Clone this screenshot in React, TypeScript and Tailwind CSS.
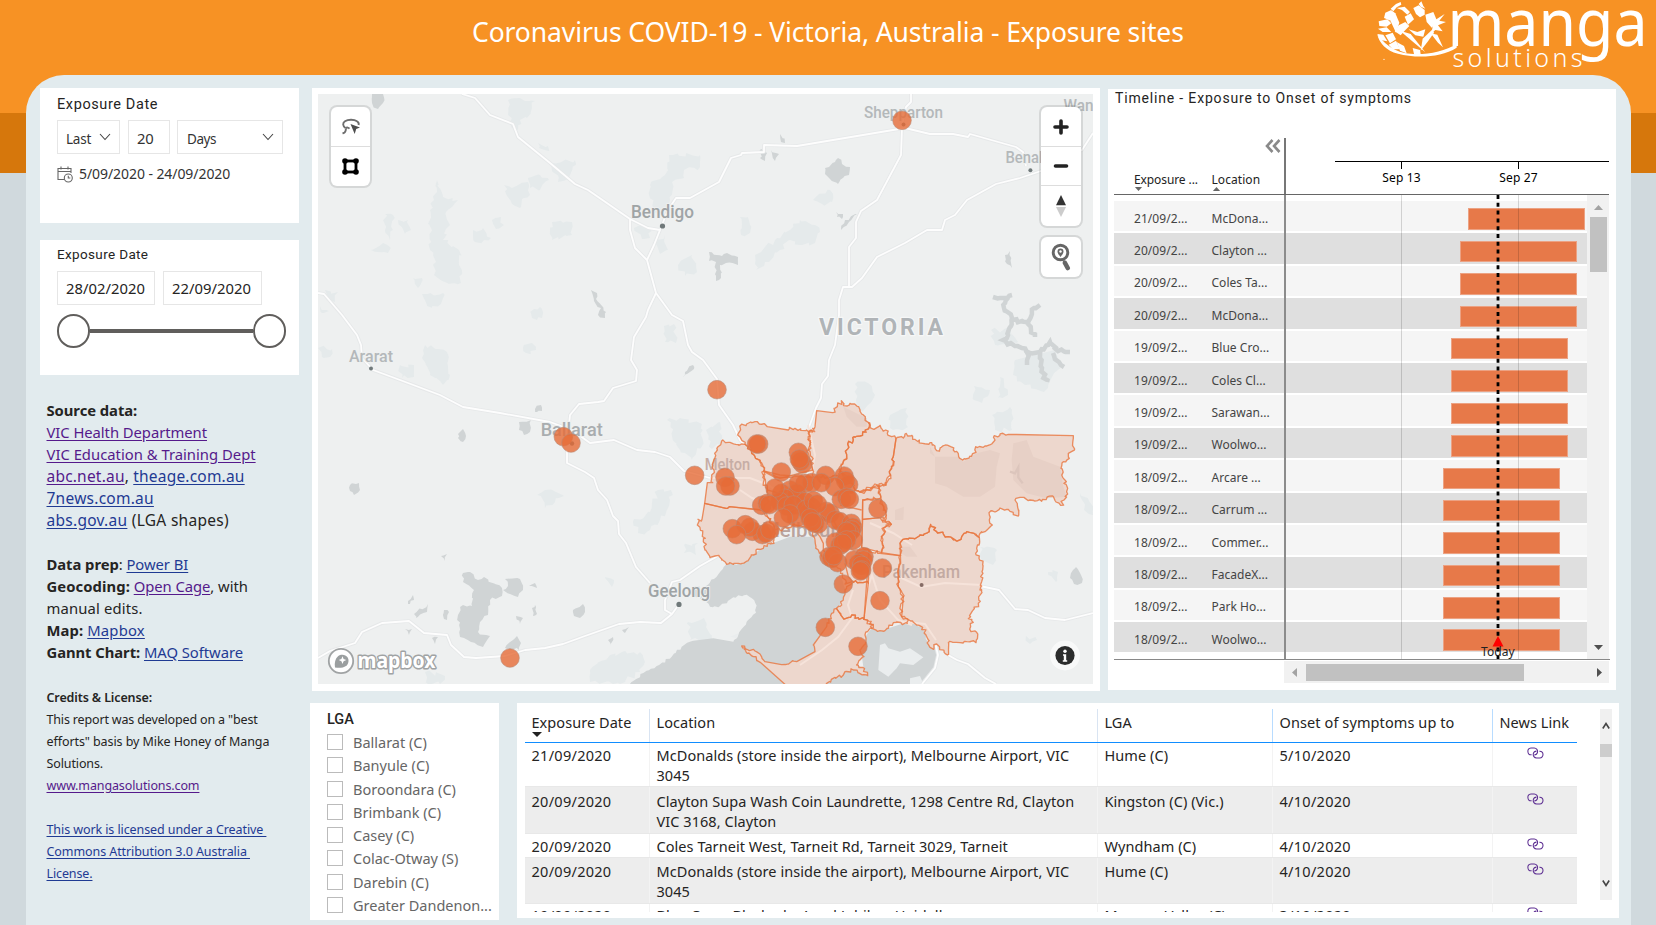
import React from "react";

const UI = "font-['Noto_Sans','Open_Sans',sans-serif]";
const DIN = "font-['Roboto','Noto_Sans',sans-serif]";

/* ---------- map data (page pixels) ---------- */

const ROADS = [
  "462,94 475,98 490,115 513,124 518,137 550,163 575,184 588,190 630,219 630,230 635,248 647,260 656,293 672,315 683,321 688,345 692,352 703,360 717,379 719,405 733,425 740,440 752,455",
  "630,219 648,228 660,230 654,245 647,260",
  "660,230 668,210 676,198 690,198 719,182 731,158 741,155 742,153 764,152 764,145 797,146 905,128 930,134 953,134 968,137 970,134 1016,147 1023,152 1026,166",
  "902,125 906,107 911,102 911,94",
  "902,128 901,155 877,200 861,211 856,222 856,238 849,247 849,286",
  "1093,133 1082,150 1041,171 1020,178 996,184 967,200 955,215 945,220 942,230 927,230 905,243 877,257 862,278 852,287 843,287 839,300 839,315 835,345 829,360 828,376 822,384 821,398 816,408 808,430",
  "656,293 648,310 646,317 634,337 631,360 637,370 636,381 613,388 604,401 598,402 579,404 570,415 569,425",
  "318,293 324,294 342,315 357,335 361,345 362,358 373,370 400,380 440,395 463,407 500,413 550,422 572,430 590,443 614,440 637,450 655,452 670,457 684,471 710,478",
  "567,450 567,463 585,472 594,478 598,490 607,500 613,516 618,521 619,534 626,543 636,567 650,583",
  "318,658 330,651 355,643 362,632 382,623 409,621 424,633 447,635 451,645 464,657 476,658 505,656 525,650 545,648 563,644 585,636 619,624 640,622 661,623 672,614 677,607",
  "672,614 665,610 665,600 672,582 680,580 700,566 725,552",
  "980,586 999,590 1015,609 1028,610 1045,618 1065,620 1093,613",
  "948,655 957,660 968,664 985,678 996,684",
  "934,638 938,655 935,668 922,684",
];

const INNER_ROADS = [
  "710,478 750,478 768,485 790,500",
  "808,425 815,455 810,480",
  "740,490 752,498 765,502",
  "870,523 893,533 912,545",
  "895,575 921,587 945,583 982,585",
  "853,590 848,605 852,618 838,637 822,650 800,665",
  "865,615 867,590 872,575 880,600 898,620 912,625",
  "905,622 925,624 936,640",
];

const PARKS = [
  "437,180 441,190 443,197 458,200 452,207 446,212 450,225 443,240 459,250 459,265 461,283 445,282 434,275 436,262 430,250 430,210 434,200",
  "385,214 393,215 393,230 390,240 385,230",
  "398,220 408,220 411,230 405,234",
  "371,250 383,243 390,247 388,253",
  "473,230 483,228 491,238 484,240 475,242",
  "492,220 501,217 504,225 496,229",
  "508,100 520,98 535,101 532,108 527,118 520,120 518,130 512,128 508,115",
  "504,185 512,188 528,182 530,195 524,198 520,208 512,204",
  "528,178 540,175 549,180 540,190 530,188",
  "538,143 548,146 548,151 539,148",
  "325,290 338,292 335,302 327,300",
  "320,306 329,311 322,313",
  "413,278 422,278 418,288",
  "422,294 443,293 441,304 427,306",
  "530,312 540,307 542,318 532,318",
  "425,345 447,352 450,375 443,385 430,375 422,358",
  "400,365 414,365 414,377 402,378",
  "318,348 332,349 330,357 322,357",
  "523,348 532,343 536,350 526,353",
  "669,155 700,155 700,167 684,170 684,178 672,182 670,200 662,215 652,212 650,185 665,175",
  "634,228 650,228 650,238 642,239",
  "655,240 665,235 668,250 660,254",
  "740,217 748,217 750,233 741,235",
  "755,255 775,240 790,230 800,220 815,225 820,232 815,243 800,245 790,240 780,250 765,262 756,270",
  "678,265 692,255 697,272 685,276",
  "813,200 830,190 832,202 822,204",
  "552,163 575,160 570,175 558,182",
  "552,222 572,222 572,235 552,240",
  "1015,360 1055,350 1060,365 1044,392 1025,385 1013,375",
  "991,330 1010,330 1018,342 995,345",
  "855,384 868,383 875,395 868,405 862,412 856,400",
  "890,415 907,408 908,427 893,430",
  "974,386 990,390 982,403 974,400",
  "992,415 1010,407 1012,430 995,430",
  "1000,377 1008,395 998,398",
  "667,420 680,418 702,424 703,440 692,460 680,450",
  "706,430 720,422 722,440 712,449",
  "664,326 674,324 676,343 665,342",
  "537,495 545,490 564,496 555,502 545,508",
  "633,522 650,512 658,490 671,490 668,508 660,520 650,530 638,533",
  "684,545 698,543 696,555 684,553",
  "605,577 614,580 612,587",
  "590,670 610,655 640,652 645,662 640,672 620,684 590,682",
  "425,672 445,676 440,684 428,684",
  "980,547 997,550 993,565 982,560",
  "1048,572 1058,572 1056,582",
  "1026,636 1037,640 1030,644",
  "688,622 704,618 712,640 690,640",
  "1080,493 1092,505 1093,515 1084,510",
];

const LAKES = [
  "372,94 383,94 383,103 378,109 372,103",
  "825,168 835,162 838,158 842,164 850,167 849,175 840,180 838,184 830,179 825,174",
  "771,150 779,154 775,161",
  "780,134 785,143 781,142",
  "761,149 767,153 765,161 760,158",
  "709,252 722,256 727,253 738,257 738,265 726,263 720,265 721,278 716,281 716,262 709,261",
  "591,290 597,293 596,299 606,312 605,318 598,315 601,308 594,301",
  "836,212 843,214 842,219 837,217",
  "841,230 845,220 857,214 849,222",
  "685,372 693,365 694,369 687,374 683,377",
  "463,573 470,572 478,580 484,577 502,588 502,596 490,600 488,615 480,622 478,632 490,636 483,647 471,642 460,637 458,615 463,605 472,606 474,590 463,582",
  "505,579 520,579 523,590 518,597 510,594 503,590 508,586",
  "573,610 583,604 585,612 580,618 574,616",
  "414,614 428,604 427,612 416,618",
  "408,601 413,595 414,600 410,604",
  "519,422 531,420 530,432 524,435 519,430",
  "458,434 463,429 466,436 463,442 458,438",
  "535,409 541,405 542,411 537,412",
  "350,485 356,484 359,480 360,490 354,495 350,491",
  "441,556 447,554 445,561",
  "505,648 513,640 517,636 521,643 519,650",
  "444,610 449,612 447,620 444,619",
  "516,616 523,618 520,624",
  "532,608 535,605 537,614 533,616",
  "529,586 535,583 537,588",
  "405,629 412,629 409,635",
  "432,638 438,637 435,644",
  "608,640 613,637 611,646",
  "622,630 629,627 625,633",
  "1005,255 1010,251 1012,268 1007,264",
  "1073,570 1076,567 1081,575 1082,583 1074,584 1070,578",
];

const EILDON = [
  "993,297 1000,298 1012,295",
  "1008,298 1004,308 1012,318 1011,326 1008,335 1003,340 1015,346 1022,348 1030,353 1040,352 1050,342 1058,351 1070,352",
  "1012,320 1028,322 1031,330 1035,337",
  "1028,322 1034,308 1040,305",
  "1040,352 1042,368 1047,382",
  "1028,350 1027,365",
  "1053,353 1059,362 1064,367",
];

/* Local grid: origin (680,390), one third of a pixel per unit */
const WATER = [
  "-150,882 -110,849 -70,828 -25,800 5,770 40,752 100,745 160,755 175,735 200,695 228,668 226,640 200,614 160,622 115,652 90,650 60,625 75,590 110,560 140,522 186,521 250,470 330,440 400,440 415,480 440,500 470,520 490,580 500,610 470,655 440,710 563,857 440,882",
  "575,715 600,722 625,715 685,695 725,710 745,760 775,770 775,800 765,830 735,870 715,882 440,882 470,862 563,857 550,830 540,760",
  "40,590 60,590 60,615 50,622 30,610",
];

const ISLANDS = [
  "600,765 615,760 625,775 660,785 690,775 730,802 700,825 660,820 650,835 625,860 595,840",
  "690,865 720,858 730,882 690,882",
  "150,740 175,730 170,745",
];

const REGIONS = [
  "125,153 150,157 195,163 215,190 240,215 251,243 250,278 262,300 262,340 250,360 148,350 138,355 74,340 82,278 98,278 95,255 102,240 100,215 104,190 112,180",
  "182,106 198,107 200,102 215,98 225,95 238,102 252,101 262,110 325,120 328,112 345,115 380,120 395,120 398,126 385,130 390,140 385,150 390,160 385,180 395,200 398,240 300,265 253,243 240,215 215,190 195,163 173,135",
  "74,340 138,355 148,350 250,361 262,380 285,420 282,460 262,462 250,475 228,480 220,495 186,520 140,523 125,510 118,500 105,498 90,503 82,488 75,480 79,463 70,455 76,445 68,430 52,405 54,388 66,388",
  "410,62 458,68 462,55 472,50 484,32 490,44 502,48 510,40 524,42 536,50 540,62 545,72 556,80 566,98 568,108 564,118 548,126 540,138 522,140 520,150 503,162 500,195 493,210 488,222 478,232 478,250 440,262 400,262 398,240 385,190 390,160 384,148 390,136 388,126 404,125 398,115 405,110",
  "566,98 570,108 582,118 600,106 606,117 617,120 622,130 635,140 648,146 640,200 642,215 634,230 628,245 632,255 620,268 618,285 605,280 595,290 585,282 575,295 560,292 552,303 535,303 515,280 495,255 478,245 488,222 495,208 500,195 503,162 520,150 522,140 540,138 548,126 566,116",
  "648,146 670,144 675,132 683,138 695,136 698,148 718,150 728,160 750,158 757,165 765,168 770,182 778,183 784,172 796,165 812,170 820,180 830,184 836,200 848,210 856,207 888,187 887,170 910,172 935,162 945,150 943,137 960,132 985,133 1180,137 1178,160 1184,177 1165,190 1168,205 1150,215 1143,235 1148,262 1163,295 1163,312 1152,330 1142,346 1128,336 1118,318 1085,334 1050,330 1020,322 1005,330 1012,345 1015,378 1000,374 990,364 960,354 945,366 927,368 928,390 937,405 915,425 905,425 897,442 882,430 860,425 845,440 828,452 805,440 790,432 770,425 752,403 748,425 720,435 700,445 685,447 660,460 662,497 605,488 607,465 605,440 612,432 610,415 634,403 615,395 618,375 612,350 600,340 600,310 598,290 618,285 632,255 628,245 642,215 640,200",
  "548,330 562,326 600,326 606,340 618,365 615,392 600,383 548,388",
  "548,388 600,383 620,395 634,403 616,410 606,415 612,432 605,440 609,465 605,488 545,472",
  "660,460 685,447 700,445 720,435 748,425 752,403 770,425 790,432 805,440 828,452 845,440 860,425 882,430 898,442 890,475 887,490 897,505 908,525 906,545 902,560 905,575 900,600 905,605 895,640 878,662 865,686 875,692 873,725 890,727 888,758 860,755 840,758 805,758 802,795 770,762 762,775 750,772 738,735 728,712 710,705 692,693 682,686 665,680 670,620 655,590 658,560 655,540 662,520",
  "567,480 600,490 658,497 660,520 655,540 655,590 660,600 670,620 662,645 665,680 685,690 682,700 640,698 625,715 615,722 600,722 575,715 578,705 552,688",
  "251,243 300,255 400,262 440,262 478,250 515,280 535,303 560,300 600,285 600,326 548,330 545,472 567,480 565,580 520,577 495,582 488,550 470,530 440,510 415,480 400,440 400,415 345,405 300,420 285,420 262,380 250,360 262,340 262,300 257,280",
  "520,577 565,580 552,688 535,683 515,675 512,682 490,685 470,655 485,645 495,610 500,590",
  "470,655 490,685 512,682 515,675 535,683 552,688 580,703 570,715 555,735 552,765 540,780 552,800 530,825 548,832 563,857 520,840 495,845 490,855 465,862 440,880 430,892 325,892 250,825 220,800 185,768 225,783 240,792 255,815 305,824 350,815 405,785 400,765 440,710 455,670",
];

const INNER_LINES = [
  "250,243 262,250 285,262 340,262",
  "262,300 300,310 330,300",
  "400,415 420,440 430,460 430,480 445,500",
  "545,360 500,350 480,345",
  "520,577 505,560 500,540 495,520",
  "490,470 520,480 567,480",
  "535,303 552,310 560,298 572,302 580,292 600,296",
  "455,380 475,420 490,430",
];

const SHADES = [
  "750,170 765,200 835,200 850,215 890,190 930,180 960,190 950,230 945,290 900,320 850,320 800,290 765,280 765,200 750,190",
  "1000,160 1040,150 1060,200 1140,230 1150,290 1160,320 1100,325 1040,310 1000,270 995,210",
  "490,50 560,85 560,110 530,110 500,80",
  "665,470 690,470 705,490 712,500 680,500 664,490",
  "645,360 672,350 670,390 645,390",
];

const CASES: [number, number][] = [
  [157, 416], [247, 434], [218, 424], [210, 412], [196, 404], [170, 434],
  [258, 430], [270, 420], [236, 162], [230, 162], [355, 187], [368, 222],
  [362, 214], [358, 207], [304, 246], [135, 262], [150, 288], [137, 288],
  [492, 258], [437, 256], [506, 284], [497, 272], [464, 290], [375, 280],
  [395, 278], [330, 300], [424, 278], [305, 310], [345, 322], [350, 310],
  [355, 280], [315, 325], [300, 335], [285, 294], [245, 346], [262, 340],
  [268, 344], [484, 328], [500, 322], [508, 328], [375, 335], [320, 348],
  [340, 345], [395, 352], [450, 370], [439, 364], [350, 384], [385, 368],
  [378, 358], [400, 332], [412, 342], [415, 402], [405, 400], [330, 372],
  [390, 384], [310, 384], [466, 390], [397, 396], [594, 356], [480, 395],
  [495, 440], [514, 400], [518, 412], [515, 420], [508, 428], [500, 424],
  [520, 450], [466, 456], [480, 466], [500, 450], [488, 460], [447, 500],
  [455, 505], [473, 518], [461, 497], [522, 510], [552, 500], [550, 510],
  [535, 520], [545, 526], [545, 540], [541, 543], [607, 534], [490, 582],
  [600, 632], [436, 712], [534, 769], [-350, 140], [-327, 159], [44, 256],
  [111, -1], [-510, 804], [666, -809],
];

type Label = { t: string; x: number; y: number; s: number; w?: number; c: string };
const LABELS: Label[] = [
  { t: "Shepparton", x: 864, y: 117.5, s: 16, w: 79, c: "#b4b8ba" },
  { t: "Benalla", x: 1005.5, y: 163, s: 16, w: 49, c: "#b4b8ba" },
  { t: "Wangaratta", x: 1063.5, y: 111, s: 16, w: 79, c: "#b4b8ba" },
  { t: "Bendigo", x: 631, y: 218, s: 18.5, w: 63, c: "#9fa4a6" },
  { t: "Ararat", x: 349, y: 361.5, s: 16, w: 44, c: "#b4b8ba" },
  { t: "Ballarat", x: 540.7, y: 435.5, s: 18, w: 62, c: "#a9adaf" },
  { t: "Geelong", x: 648, y: 596.7, s: 18.5, w: 62, c: "#9fa4a6" },
];

/* Repeatable 0..1 value for a map position, so that neighbours share one border. */
const noise = (x: number, y: number) => {
  const v = Math.sin(x * 12.9898 + y * 78.233) * 43758.5453;
  return v - Math.floor(v);
};

/* Splits medium-length edges and nudges the new vertices, which gives natural borders. */
function rough(points: string, amp: number, min: number, max: number, closed = true) {
  const p = points.split(" ").map((s) => s.split(",").map(Number));
  const out: string[] = [];
  p.forEach((a, i) => {
    out.push(a.join(","));
    if (!closed && i === p.length - 1) return;
    const b = p[(i + 1) % p.length];
    const len = Math.hypot(b[0] - a[0], b[1] - a[1]);
    if (len < min || len > max) return;
    const swap = a[0] > b[0] || (a[0] === b[0] && a[1] > b[1]);
    const [s, e] = swap ? [b, a] : [a, b];
    const n = Math.max(2, Math.round(len / min));
    const mids: string[] = [];
    for (let k = 1; k < n; k++) {
      const x = s[0] + ((e[0] - s[0]) * k) / n;
      const y = s[1] + ((e[1] - s[1]) * k) / n;
      mids.push(`${(x + (noise(x, y) - 0.5) * amp).toFixed(1)},${(y + (noise(y, x) - 0.5) * amp).toFixed(1)}`);
    }
    out.push(...(swap ? mids.reverse() : mids));
  });
  return out.join(" ");
}

const BORDERS = REGIONS.map((r) => rough(r, 11, 7, 48));
const GREEN = PARKS.map((r) => rough(r, 5, 4, 40));
const PONDS = LAKES.map((r) => rough(r, 3, 3.5, 30));
const RESERVOIR = EILDON.map((r) => rough(r, 3.5, 3, 30, false));
const SEA = WATER.map((r) => rough(r, 7, 9, 60));

const pts = (p: string[], cls: string) => p.map((d, i) => <polygon key={i} points={d} className={cls} />);
const lines = (p: string[], cls: string) => p.map((d, i) => <polyline key={i} points={d} className={cls} />);

function MapCanvas() {
  return (
    <svg viewBox="318 94 775 590" className="block h-[590px] w-[775px] bg-[#eef0f0]">
      {pts(GREEN, "fill-[#e5eaeb]")}
      {pts(PONDS, "fill-[#d0d4d5]")}
      {lines(RESERVOIR, "fill-none stroke-[#d0d4d5] stroke-[4.5px]")}
      <g transform="translate(680 390) scale(.33333)">
        {pts(SEA, "fill-[#d0d4d5]")}
        {pts(ISLANDS, "fill-[#eaedee]")}
      </g>
      <g strokeLinejoin="round">
        {lines(ROADS, "fill-none stroke-[#e6e8e9] stroke-[3.6px]")}
        {lines(ROADS, "fill-none stroke-[#fdfdfd] stroke-[1.8px]")}
      </g>
      <g transform="translate(680 390) scale(.33333)">
        {pts(BORDERS, "fill-[#edd7cd]")}
        {pts(SHADES, "fill-[#e7d0c6]")}
        <polyline points="990,245 1005,250 1015,232 1015,262 1028,280" className="fill-none stroke-[#dcc5bc] stroke-[7px]" />
      </g>
      {lines(INNER_ROADS, "fill-none stroke-[#f6e3da] stroke-[2px]")}
      <g className="font-['Roboto',sans-serif] font-medium" strokeLinejoin="round">
        {LABELS.map((l) => (
          <text key={l.t} x={l.x} y={l.y} fontSize={l.s} textLength={l.w} lengthAdjust="spacingAndGlyphs" fill={l.c} stroke="#eef0f0" strokeWidth="2" paintOrder="stroke">
            {l.t}
          </text>
        ))}
        <text x="819" y="334.7" fontSize="23" textLength="124" fontWeight="700" fill="#b0b4b7" stroke="#f6f7f7" strokeWidth="2.5" paintOrder="stroke">VICTORIA</text>
        <text x="704.7" y="470" fontSize="16" textLength="45.5" lengthAdjust="spacingAndGlyphs" fill="#c6ada5">Melton</text>
        <text x="762" y="537" fontSize="21" textLength="98" lengthAdjust="spacingAndGlyphs" fill="#b9a49e">Melbourne</text>
        <text x="882" y="577.7" fontSize="17.5" textLength="78" lengthAdjust="spacingAndGlyphs" fill="#c3aaa2">Pakenham</text>
      </g>
      <g className="fill-[#70797a]">
        <circle cx="662.5" cy="226" r="2.6" />
        <circle cx="371" cy="368.5" r="2" />
        <circle cx="679" cy="604.4" r="2.6" />
        <circle cx="1030.4" cy="170.3" r="2" />
        <circle cx="921.6" cy="585" r="2" className="fill-[#866c65]" />
        <circle cx="572" cy="443.5" r="2.2" />
        <circle cx="903.5" cy="124.5" r="2" />
      </g>
      <g transform="translate(680 390) scale(.33333)" strokeLinejoin="round">
        {pts(BORDERS, "fill-none stroke-[#e8763f] stroke-[4px] opacity-80")}
        {lines(INNER_LINES, "fill-none stroke-[#e8763f] stroke-[4px] opacity-80")}
        {CASES.map(([x, y], i) => (
          <circle key={i} cx={x} cy={y} r="28" className="fill-[#e66c37]/80 stroke-[#b98c78]/70 stroke-[2.5px]" />
        ))}
      </g>
      {/* attribution wordmark */}
      <circle cx="341" cy="661" r="12.2" fill="#fff" stroke="#a0a3a4" strokeWidth="1.8" />
      <path d="M335 667.5c-.8-5 .3-9 3-11.300c3-2.400 7.600-1.800 9.500 1s1 7-1.500 8.800c-2.800 2-7 2.200-11 1.500z" fill="#9b9fa0" />
      <path d="M342.500 656.300l1.100 2.700 2.700 1.100-2.700 1.100-1.100 2.700-1.100-2.700-2.700-1.100 2.700-1.100z" fill="#fff" />
      <text x="357.500" y="667.700" fontSize="21" textLength="78" lengthAdjust="spacingAndGlyphs" className="font-['Noto_Sans',sans-serif] font-bold" fill="#fff" stroke="#a0a3a4" strokeWidth="3" paintOrder="stroke" strokeLinejoin="round">mapbox</text>
      {/* attribution button */}
      <circle cx="1065" cy="655.500" r="15" fill="#fff" opacity=".6" />
      <circle cx="1065" cy="655.500" r="9.600" fill="#2c2d2d" />
      <circle cx="1065" cy="651.300" r="1.700" fill="#fff" />
      <path d="M1063 654.300h3.200v6h1v1.500h-4.400v-1.500h1v-4.500h-.8z" fill="#fff" />
    </svg>
  );
}

const ctl = "flex h-[39.500px] items-center justify-center pt-px";
const ctlBox = "rounded-[6px] bg-white ring-2 ring-black/10 divide-y divide-[#ddd]";

function MapPanel() {
  return (
    <section className="relative h-[603px] w-[788px] bg-white px-[6px] pt-[6px]">
      <MapCanvas />
      <div className={"absolute left-[19px] top-[19px] w-[39px] " + ctlBox}>
        <div className={ctl}>
          <svg viewBox="0 0 20 18" className="h-[18px] w-5" fill="none" stroke="#6d6d6d" strokeWidth="1.900">
            <path d="M4.500 10C1.500 8 1.500 5 4 3.300 7 1.300 13 1.200 16 3.300c1.500 1 2 2.300 1.600 3.700" />
            <path d="M4.500 10.500c1.500-1.500 3-1 4 .2M4.500 10.500c1.200 1.700-.2 2.500-.6 3.700-.4 1-1.500 1-2.400 1.200" />
            <path d="M9.500 6l9.500 3.500-3.800 1.500-1.500 5z" fill="#4d4d4d" stroke="none" />
          </svg>
        </div>
        <div className={ctl}>
          <svg viewBox="0 0 17 17" className="h-[17px] w-[17px]">
            <rect x="3" y="3" width="11" height="11" fill="none" stroke="#000" strokeWidth="2.800" />
            <g fill="#000"><circle cx="3" cy="3" r="2.800" /><circle cx="14" cy="3" r="2.800" /><circle cx="3" cy="14" r="2.800" /><circle cx="14" cy="14" r="2.800" /></g>
          </svg>
        </div>
      </div>
      <div className={"absolute left-[729px] top-[19px] w-10 " + ctlBox}>
        <div className={ctl}>
          <svg viewBox="0 0 16 16" className="h-4 w-4" stroke="#222" strokeWidth="3.600" strokeLinecap="round"><path d="M8 2v12M2 8h12" /></svg>
        </div>
        <div className={ctl}>
          <svg viewBox="0 0 16 16" className="h-4 w-4" stroke="#222" strokeWidth="3.600" strokeLinecap="round"><path d="M2.500 8h11" /></svg>
        </div>
        <div className={ctl}>
          <svg viewBox="0 0 12 24" className="h-6 w-3"><path d="M6 1l5 10.300H1z" fill="#333" /><path d="M6 23L1 13h10z" fill="#ccc" /></svg>
        </div>
      </div>
      <div className={"absolute left-[729px] top-[149px] w-10 " + ctlBox}>
        <div className={ctl}>
          <svg viewBox="0 0 20 28" className="h-7 w-5">
            <circle cx="9.500" cy="9.500" r="7.300" fill="none" stroke="#666" strokeWidth="2.900" />
            <path d="M9.500 14c-2-2.500-3-4-3-5.500a3 3 0 0 1 6 0c0 1.500-1 3-3 5.500z" fill="#666" />
            <circle cx="9.500" cy="8.500" r="1.200" fill="#fff" />
            <path d="M12.500 17.500l1.500 2.500" stroke="#666" strokeWidth="2" />
            <path d="M14 20l2.700 5" stroke="#666" strokeWidth="4.600" strokeLinecap="round" />
          </svg>
        </div>
      </div>
    </section>
  );
}

/* ---------- header ---------- */

function Logo() {
  return (
    <svg viewBox="1370 0 286 75" className="h-[75px] w-[286px]" fill="#fff">
      <g transform="translate(1370 0) scale(.33333)">
        <polygon points="62,26 78,12 92,6 94,14 80,22 70,34" />
        <polygon points="80,24 104,20 120,36 112,44 96,30" />
        <polygon points="46,38 64,30 74,52 62,62 42,54" />
        <polygon points="26,64 52,58 64,70 50,80 28,78" />
        <polygon points="24,86 50,82 64,96 38,96" />
        <polygon points="66,32 76,40 88,68 78,98 62,64" />
        <polygon points="86,76 106,66 118,78 104,92 92,106 74,94" />
        <polygon points="22,102 40,104 52,124 30,120" />
        <polygon points="46,106 68,98 78,118 60,130" />
        <polygon points="56,134 78,122 90,148 68,148" />
        <polygon points="80,126 102,138 110,160 90,152" />
        <polygon points="104,50 122,40 132,58 114,74" />
        <polygon points="130,24 146,16 164,30 164,44 150,52 138,42" />
        <polygon points="146,12 154,4 160,18 166,26 152,20" />
        <polygon points="166,44 190,36 200,60 186,84 170,66" />
        <polygon points="192,62 224,42 208,62 228,66 204,76 218,94 196,90 184,100" />
        <polygon points="116,88 142,96 166,88 160,110 136,106" />
        <polygon points="90,92 122,102 166,157 134,130" />
        <polygon points="182,100 202,104 219,142 204,128 190,110" />
        <polygon points="158,116 188,88 192,98 174,124 152,152" />
        <polygon points="128,144 150,150 152,162 132,162" />
        <path d="M22 104c6 24 26 48 62 57 50 13 126 14 176-18v-12c-40 28-110 36-156 28-40-8-64-34-82-55z" />
        <circle cx="42" cy="178" r="2" />
      </g>
      <g className="font-['Noto_Sans',sans-serif]">
        <text x="1447.500" y="46" fontSize="65" textLength="200" lengthAdjust="spacingAndGlyphs">manga</text>
        <text x="1452.500" y="66.800" fontSize="25" textLength="130" lengthAdjust="spacing" fontWeight="300">solutions</text>
      </g>
    </svg>
  );
}

/* ---------- left column ---------- */

const Chevron = () => (
  <svg viewBox="0 0 12 8" className="h-2 w-3" fill="none" stroke="#444" strokeWidth="1.100"><path d="M1 1l5 5.500L11 1" /></svg>
);

function RelativeSlicer() {
  return (
    <section className="h-[135px] bg-white pl-[17px] pt-[7px]">
      <h2 className={DIN + " h-[25px] text-[14.500px] leading-[20px] tracking-[0.600px] text-[#252423]"}>Exposure Date</h2>
      <div className="flex gap-2 text-[14px] text-[#333]">
        <div className="flex h-[34px] w-[63px] items-center justify-between border border-[#e6e6e6] pl-2 pr-2 text-[13.500px]">
          <span className="pt-1 tracking-[-0.200px]">Last</span><Chevron />
        </div>
        <div className="flex h-[34px] w-[42px] items-center border border-[#e6e6e6] pl-2 text-[14.800px] tracking-[-0.200px]"><span className="pt-0.5">20</span></div>
        <div className="-ml-px flex h-[34px] w-[106px] items-center justify-between border border-[#e6e6e6] pl-[9px] pr-2 text-[13.500px]">
          <span className="pt-1 tracking-[-0.450px]">Days</span><Chevron />
        </div>
      </div>
      <div className="mt-[9px] flex items-center gap-[6px]">
        <svg viewBox="0 0 16 17" className="h-[17px] w-4" fill="none" stroke="#666" strokeWidth="1.100">
          <path d="M7 13.500H1V2.500h13V7M1 5.500h13M4 .5v3M11 .5v3" /><circle cx="11.300" cy="12" r="4" /><path d="M11.300 9.800V12h2" />
        </svg>
        <span className="text-[14px] leading-[22px] tracking-[-0.070px] text-[#333]">5/09/2020 - 24/09/2020</span>
      </div>
    </section>
  );
}

function RangeSlicer() {
  return (
    <section className="mt-[17px] h-[135px] bg-white pl-[17px] pt-[5px]">
      <h2 className={DIN + " h-[26px] text-[13.500px] leading-[18px] tracking-[0.350px] text-[#252423]"}>Exposure Date</h2>
      <div className="flex gap-2 text-[14.800px] tracking-[0.020px] text-[#252423]">
        <div className="flex h-[34px] w-[98px] items-center border border-[#e6e6e6] pl-2">28/02/2020</div>
        <div className="flex h-[34px] w-[99px] items-center border border-[#e6e6e6] pl-2">22/09/2020</div>
      </div>
      <div className="mt-[9px] flex w-[229px] items-center">
        <div className="h-[34px] w-[33px] rounded-full border-[2.500px] border-[#605e5c]" />
        <div className="h-1 flex-1 bg-[#605e5c]" />
        <div className="h-[34px] w-[33px] rounded-full border-[2.500px] border-[#605e5c]" />
      </div>
    </section>
  );
}

const A = ({ v, children }: { v?: boolean; children: React.ReactNode }) => (
  <a className={v ? "text-[#551a8b] underline underline-offset-2" : "text-[#1f3a93] underline underline-offset-2"}>{children}</a>
);

function Credits() {
  return (
    <div className="ml-[6.500px] mt-[24px] whitespace-pre text-[14.800px] leading-[22.060px] tracking-[-0.050px] text-[#252423]">
      <p className="font-bold tracking-[-0.050px]">Source data:</p>
      <p><A v>VIC Health Department</A></p>
      <p className="tracking-[0.010px]"><A v>VIC Education &amp; Training Dept</A></p>
      <p className="text-[15.500px] tracking-[0.200px]"><A v>abc.net.au</A>, <A>theage.com.au</A></p>
      <p className="text-[15.500px] tracking-[0.250px]"><A>7news.com.au</A></p>
      <p className="text-[15.500px] tracking-[0.280px]"><A>abs.gov.au</A> <span className="tracking-[0.300px]">(LGA shapes)</span></p>
      <p> </p>
      <p><b className="tracking-[-0.050px]">Data prep</b>: <A>Power BI</A></p>
      <div className="-mt-px">
        <p><b className="tracking-[0.080px]">Geocoding:</b> <A v>Open Cage</A>, with</p>
        <p className="tracking-[0.150px]">manual edits.</p>
        <p><b className="tracking-[0.150px]">Map:</b> <span className="tracking-[0.200px]"><A>Mapbox</A></span></p>
        <p><b>Gannt Chart:</b> <A>MAQ Software</A></p>
      </div>
      <p> </p>
      <div className="mt-[2px] text-[12.500px] tracking-[-0.120px]">
        <p className="font-semibold">Credits &amp; License:</p>
        <p className="tracking-[-0.160px]">This report was developed on a "best</p>
        <p className="tracking-[-0.080px]">efforts" basis by Mike Honey of Manga</p>
        <p>Solutions.</p>
        <p><A v>www.mangasolutions.com</A></p>
        <p> </p>
        <p className="tracking-[-0.090px]"><A>This work is licensed under a Creative </A></p>
        <p className="tracking-[-0.080px]"><A>Commons Attribution 3.0 Australia </A></p>
        <p><A>License.</A></p>
      </div>
    </div>
  );
}

/* ---------- gantt ---------- */

const GANTT: { d: string; l: string; x: number }[] = [
  { d: "21/09/2...", l: "McDona...", x: 183 },
  { d: "20/09/2...", l: "Clayton ...", x: 175 },
  { d: "20/09/2...", l: "Coles Ta...", x: 175 },
  { d: "20/09/2...", l: "McDona...", x: 175 },
  { d: "19/09/2...", l: "Blue Cro...", x: 166 },
  { d: "19/09/2...", l: "Coles Cl...", x: 166 },
  { d: "19/09/2...", l: "Sarawan...", x: 166 },
  { d: "19/09/2...", l: "Woolwo...", x: 166 },
  { d: "18/09/2...", l: "Arcare ...", x: 158 },
  { d: "18/09/2...", l: "Carrum ...", x: 158 },
  { d: "18/09/2...", l: "Commer...", x: 158 },
  { d: "18/09/2...", l: "FacadeX...", x: 158 },
  { d: "18/09/2...", l: "Park Ho...", x: 158 },
  { d: "18/09/2...", l: "Woolwo...", x: 158 },
];

function Gantt() {
  return (
    <section className="ml-2 mt-px h-[601px] w-[508px] bg-white pl-[6px]">
      <h2 className={DIN + " h-[49px] pl-px pt-px text-[14px] leading-[17px] tracking-[0.830px] text-[#252423]"}>Timeline - Exposure to Onset of symptoms</h2>
      <div className="flex h-[57px] w-[495px] border-b border-[#666]">
        <div className="flex w-[170px] flex-col">
          <svg viewBox="0 0 16 14" className="ml-[151px] mt-px h-[14px] w-4" fill="none" stroke="#8a8a8a" strokeWidth="2.600"><path d="M7.500 1L2 7l5.500 6M14.500 1L9 7l5.500 6" /></svg>
          <div className="mt-[19px] flex pl-5 text-[12px] leading-4 tracking-[-0.100px] text-[#222]">
            <div className="w-[77.500px]">Exposure ...<svg viewBox="0 0 9 5" className="-mt-px h-1 w-[9px] fill-[#666]"><path d="M0 0h9L4.500 5z" /></svg></div>
            <div className="tracking-[0.060px]">Location<svg viewBox="0 0 9 5" className="-mt-px h-1 w-[9px] fill-[#666]"><path d="M0 5h9L4.500 0z" /></svg></div>
          </div>
        </div>
        <div className="h-full w-[2px] bg-[#777]" />
        <div className="flex-1 pl-[49px] pt-[23px]">
          <div className="flex border-t-[1.500px] border-black">
            <div className="ml-[46px] flex w-[41px] flex-col items-center text-[12px] leading-[18px]"><i className="h-[7px] w-px bg-black" /><span className="whitespace-nowrap tracking-[0.150px]">Sep 13</span></div>
            <div className="ml-[76px] flex w-[41px] flex-col items-center text-[12px] leading-[18px]"><i className="h-[7px] w-px bg-black" /><span className="whitespace-nowrap tracking-[0.150px]">Sep 27</span></div>
          </div>
        </div>
      </div>
      <div className="flex h-[464px] w-[495px]">
        <div className="relative h-full w-[473px] overflow-hidden pt-[6px]">
          {GANTT.map((r, i) => (
            <div key={i} className={(i % 2 ? "bg-[#dfdfdf]" : "bg-[#f5f5f5]") + " mb-[2px] flex h-[30.400px]"}>
              <div className="flex w-[170px] items-center pl-5 pt-[5px] text-[12px] leading-4 text-[#444]">
                <span className="w-[77.500px] tracking-[0.060px]">{r.d}</span><span className="tracking-[0.020px]">{r.l}</span>
              </div>
              <div className="flex-1 pt-[7.400px]">
                <div className="h-[21.500px] w-[117px] border border-[#eca283] bg-[#e77949]" style={{ marginLeft: r.x + 1 }} />
              </div>
            </div>
          ))}
          <div className="absolute inset-y-0 left-[170px] w-[2px] bg-[#8c8c8c]" />
          <div className="absolute inset-y-0 left-[287px] w-px bg-black/15" />
          <div className="absolute inset-y-0 left-[404px] w-px bg-black/15" />
          <svg viewBox="0 0 40 465" className="absolute left-[364px] top-0 h-[465px] w-10">
            <path d="M20 0v465" stroke="#000" strokeWidth="2.800" strokeDasharray="4 3.800" />
            <path d="M20 441l5.500 10.500h-11z" fill="#f00" />
          </svg>
          <span className="absolute left-[367px] top-[449px] text-[12px] leading-[16px] tracking-[0.100px] text-[#222]">Today</span>
        </div>
        <div className="flex flex-1 flex-col items-center bg-[#f1f1f1]">
          <svg viewBox="0 0 9 5" className="mt-[10px] h-[5px] w-[9px] fill-[#a3a3a3]"><path d="M0 5h9L4.500 0z" /></svg>
          <div className="mt-[7px] h-[55px] w-[17px] bg-[#c1c1c1]" />
          <svg viewBox="0 0 9 5" className="mb-[9px] mt-auto h-[5px] w-[9px] fill-[#505050]"><path d="M0 0h9L4.500 5z" /></svg>
        </div>
      </div>
      <div className="h-[2px] w-[496px] border-t border-[#888]" />
      <div className="ml-[170px] flex h-[22px] w-[325px] items-center justify-between bg-[#f1f1f1] pl-2 pr-[7px]">
        <svg viewBox="0 0 5 9" className="h-[9px] w-[5px] fill-[#a3a3a3]"><path d="M5 0v9L0 4.500z" /></svg>
        <div className="ml-[9px] mr-auto h-[17px] w-[218px] bg-[#c1c1c1]" />
        <svg viewBox="0 0 5 9" className="h-[9px] w-[5px] fill-[#505050]"><path d="M0 0v9l5-4.500z" /></svg>
      </div>
    </section>
  );
}

/* ---------- bottom row ---------- */

const LGAS = ["Ballarat (C)", "Banyule (C)", "Boroondara (C)", "Brimbank (C)", "Casey (C)", "Colac-Otway (S)", "Darebin (C)", "Greater Dandenon..."];

function LgaList() {
  return (
    <section className="h-[217px] w-[189px] bg-white pl-[17px] pt-[7px]">
      <h2 className={DIN + " h-[24px] text-[14.500px] font-medium leading-[20px] text-[#252423]"}>LGA</h2>
      {LGAS.map((n) => (
        <div key={n} className="flex h-[23.300px] text-[14.500px] leading-[17px] text-[#666]">
          <span className="mr-[10px] h-4 w-4 border border-[#bbb]" />
          <span className="whitespace-nowrap">{n}</span>
        </div>
      ))}
    </section>
  );
}

type Row = { h: string; p: string; d: string; loc: string[]; lga: string; on: string };
const ROWS: Row[] = [
  { h: "h-[44px]", p: "pt-[2px]", d: "21/09/2020", loc: ["McDonalds (store inside the airport), Melbourne Airport, VIC", "3045"], lga: "Hume (C)", on: "5/10/2020" },
  { h: "h-[47px] bg-[#ededed]", p: "pt-[4px]", d: "20/09/2020", loc: ["Clayton Supa Wash Coin Laundrette, 1298 Centre Rd, Clayton", "VIC 3168, Clayton"], lga: "Kingston (C) (Vic.)", on: "4/10/2020" },
  { h: "h-[24px]", p: "pt-[2px]", d: "20/09/2020", loc: ["Coles Tarneit West, Tarneit Rd, Tarneit 3029, Tarneit"], lga: "Wyndham (C)", on: "4/10/2020" },
  { h: "h-[46px] bg-[#ededed]", p: "pt-[3px]", d: "20/09/2020", loc: ["McDonalds (store inside the airport), Melbourne Airport, VIC", "3045"], lga: "Hume (C)", on: "4/10/2020" },
  { h: "h-[46px]", p: "pt-px", d: "19/09/2020", loc: ["Blue Cross Blackerly, Aged Jubilee, Heidelberg"], lga: "Moonee Valley (C)", on: "3/10/2020" },
];

const LinkIcon = () => (
  <svg viewBox="0 0 17 12" className="ml-[34px] mt-[2px] h-3 w-[17px]" fill="none" stroke="#5c2d91" strokeWidth="1.050">
    <path d="M4.600 7.800A3.300 3.300 0 0 1 4 1h3.200a3.500 3.500 0 0 1 3.300 4.400c-.4 1.500-1.700 2.500-3.200 2.500" />
    <path d="M12.400 4.200a3.400 3.400 0 0 1 .4 6.800H9.600a3.500 3.500 0 0 1-3.300-4.400c.4-1.500 1.700-2.500 3.200-2.500" />
  </svg>
);

const COLS = "grid grid-cols-[124px_448px_175px_220px_85px]";

function SitesTable() {
  return (
    <section className="ml-[18px] flex h-[215px] w-[1102px] bg-white pl-2 pt-[6px]">
      <div className="h-[203px] w-[1052px] overflow-hidden text-[14.500px] leading-[20.300px] tracking-[0.060px] text-[#252423]">
        <div className={COLS + " h-[34px] border-b border-[#118dff] [&>div]:h-[33px] [&>div]:whitespace-nowrap [&>div]:pl-[6.500px] [&>div]:pt-[3px]"}>
          <div>Exposure Date<svg viewBox="0 0 10 5" className="h-[5px] w-[10px] fill-[#222]"><path d="M0 0h10L5 5z" /></svg></div>
          <div className="border-l border-[#d9e4f2]">Location</div>
          <div className="border-l border-[#d9e4f2]">LGA</div>
          <div className="border-l border-[#b8dcff] tracking-[0.100px]">Onset of symptoms up to</div>
          <div className="border-l border-[#b8dcff]">News Link</div>
        </div>
        {ROWS.map((r, i) => (
          <div key={i} className={COLS + " border-b border-[#e8e8e8] [&>div]:pl-[6.500px] " + r.h}>
            <div className={"tracking-[0.280px] " + r.p}>{r.d}</div>
            <div className={"whitespace-nowrap border-l border-[#f3f3f3] " + r.p}>{r.loc.map((t, k) => <p key={k}>{t}</p>)}</div>
            <div className={"border-l border-[#f3f3f3] " + r.p}>{r.lga}</div>
            <div className={"border-l border-[#f3f3f3] tracking-[0.280px] " + r.p}>{r.on}</div>
            <div className={"border-l border-[#f3f3f3] !pl-0 " + r.p}><LinkIcon /></div>
          </div>
        ))}
      </div>
      <div className="ml-[23px] flex h-[191px] w-3 flex-col items-center bg-[#f0f0f0]">
        <svg viewBox="0 0 8 7" className="mt-[13px] h-[7px] w-2" fill="none" stroke="#444" strokeWidth="1.600"><path d="M.8 6.500L4 1.500l3.200 5" /></svg>
        <div className="mt-[15px] h-[13px] w-3 bg-[#cdcdcd]" />
        <svg viewBox="0 0 8 7" className="mb-[13px] mt-auto h-[7px] w-2" fill="none" stroke="#444" strokeWidth="1.600"><path d="M.8.500L4 5.500l3.200-5" /></svg>
      </div>
    </section>
  );
}

export default function App() {
  return (
    <div className={UI + " flex h-[925px] w-[1656px] flex-col overflow-hidden bg-[linear-gradient(to_bottom,#f79224_113px,#d6770c_113px,#d6770c_173px,#d0d9dd_173px)]"}>
      <header className="flex h-[75px] justify-between pl-[472px]">
        <h1 className="whitespace-nowrap pt-[13px] text-[26.500px] leading-[38px] tracking-[-0.110px] text-white">Coronavirus COVID-19 - Victoria, Australia - Exposure sites</h1>
        <Logo />
      </header>
      <main className="ml-[26px] flex h-[850px] w-[1605px] rounded-t-[38px] bg-[#e2ebee] pl-[14px] pt-[13px]">
        <aside className="w-[259px]">
          <RelativeSlicer />
          <RangeSlicer />
          <Credits />
        </aside>
        <div className="ml-[11px]">
          <div className="flex pl-[2px]">
            <MapPanel />
            <Gantt />
          </div>
          <div className="mt-3 flex">
            <LgaList />
            <SitesTable />
          </div>
        </div>
      </main>
    </div>
  );
}
